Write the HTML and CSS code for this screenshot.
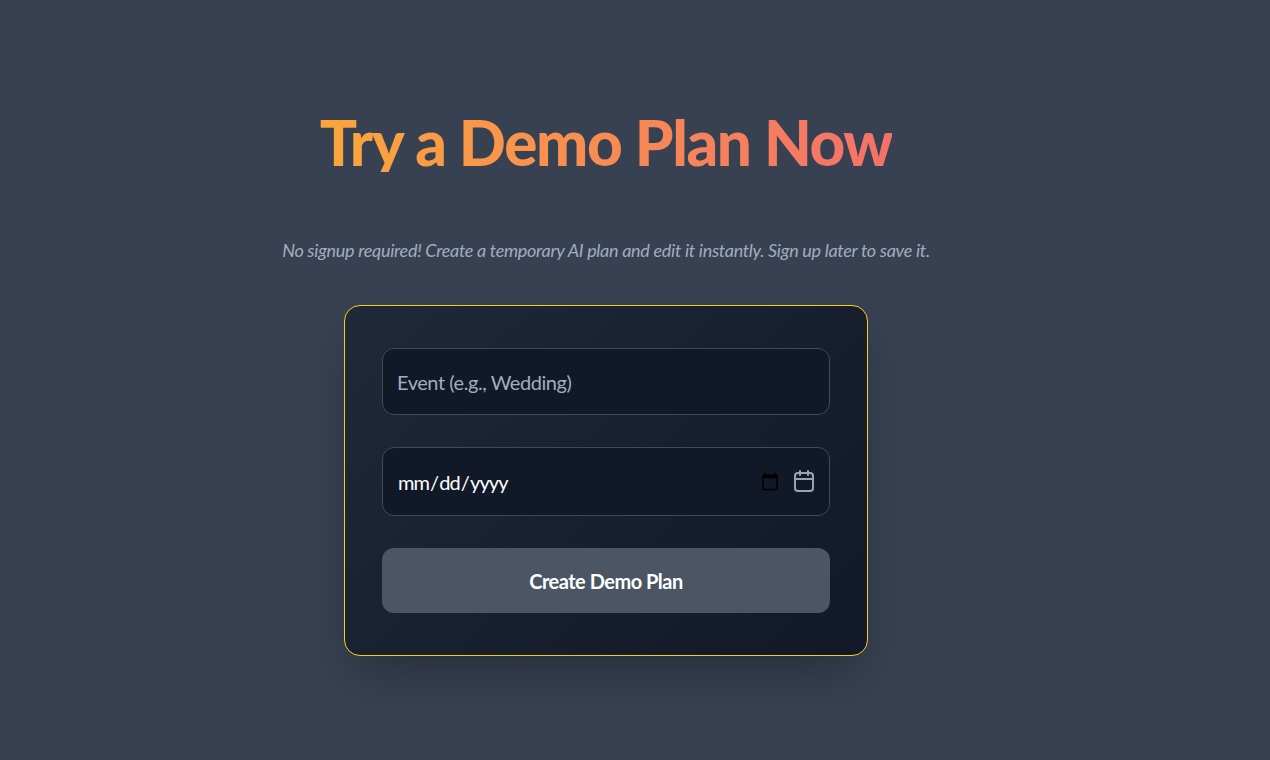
FILE: index.html
```html
<!DOCTYPE html>
<html lang="en">
  <head>
    <meta charset="UTF-8" />
    <meta name="viewport" content="width=device-width, initial-scale=1.0" />
    <title>Try a Demo Plan</title>
    <link rel="stylesheet" href="styles.css">
  </head>
  <body>
    <section class="demo">
      <h1 class="demo-title">Try a Demo Plan Now</h1>
      <p class="demo-sub">No signup required! Create a temporary AI plan and edit it instantly. Sign up later to save it.</p>
      <form class="card">
        <input type="text" class="field field-event" placeholder="Event (e.g., Wedding)" />
        <div class="date-wrap">
          <input type="date" class="field field-date" />
          <svg class="date-icon" width="24" height="24" viewBox="0 0 24 24" fill="none" stroke="currentColor" stroke-width="2" stroke-linecap="round" stroke-linejoin="round">
            <path d="M8 2v4" />
            <path d="M16 2v4" />
            <rect x="3" y="4" width="18" height="18" rx="3" />
            <path d="M3 10h18" />
          </svg>
        </div>
        <button type="button" class="submit">Create Demo Plan</button>
      </form>
    </section>
  </body>
</html>
```

FILE: styles.css
```css
* {
  box-sizing: border-box;
}
body {
  margin: 0;
  height: 760px;
  overflow: hidden;
  background-color: #374151;
  font-family: Lato, sans-serif;
}
.demo {
  display: flex;
  flex-direction: column;
  align-items: center;
  width: 1212px;
  padding-top: 112px;
}
.demo-title {
  margin: 0;
  font-size: 62px;
  line-height: 60px;
  font-weight: 900;
  letter-spacing: -1.4px;
  background: linear-gradient(90deg, #fba63c, #f4716a);
  -webkit-background-clip: text;
  background-clip: text;
  color: transparent;
}
.demo-sub {
  margin: 64px 0 0;
  font-size: 18px;
  line-height: 28px;
  font-style: italic;
  letter-spacing: -0.29px;
  color: #a0aec0;
}
.card {
  display: flex;
  flex-direction: column;
  width: 524px;
  margin-top: 41px;
  padding: 42px 37px;
  border: 1px solid #facc15;
  border-radius: 16px;
  background: linear-gradient(135deg, #1f2937, #111827);
  box-shadow: 0 25px 50px -12px rgba(0, 0, 0, 0.3);
}
.field {
  display: block;
  width: 100%;
  padding: 0 14px;
  border: 1px solid #3f4a5c;
  border-radius: 12px;
  background-color: #111827;
  color: white;
  font-family: inherit;
  font-size: 20px;
  letter-spacing: -0.45px;
  outline: none;
}
.field::placeholder {
  color: #a0aec0;
}
.field-event {
  height: 67px;
}
.date-wrap {
  position: relative;
  margin-top: 32px;
}
.field-date {
  height: 69px;
  padding-right: 47px;
  letter-spacing: -0.9px;
}
.date-icon {
  position: absolute;
  top: 22px;
  right: 14px;
  color: #9ca3af;
}
.submit {
  height: 65px;
  margin-top: 32px;
  border: none;
  border-radius: 12px;
  background-color: #4b5563;
  color: white;
  font-family: inherit;
  font-size: 20px;
  font-weight: 700;
  letter-spacing: -0.5px;
  cursor: pointer;
}
```
